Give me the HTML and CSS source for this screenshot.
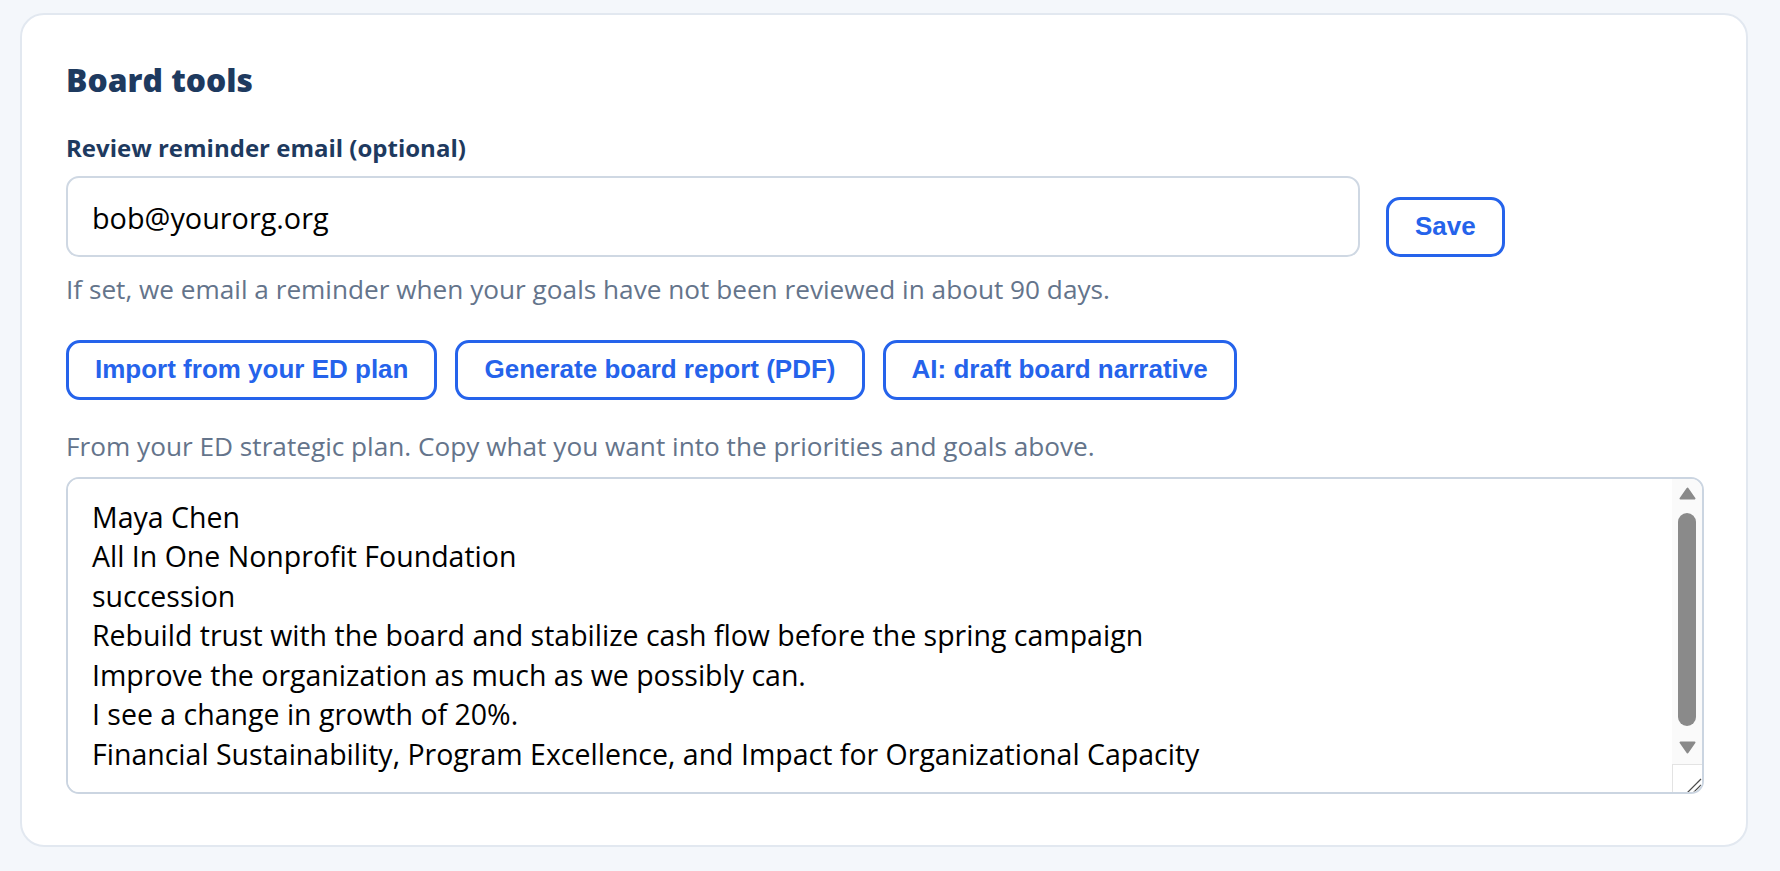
FILE: index.html
```html
<!DOCTYPE html>
<html lang="en">
<head>
    <meta charset="UTF-8">
    <meta name="viewport" content="width=device-width, initial-scale=1.0">
    <title>Board tools</title>
    <link rel="stylesheet" href="styles.css">
</head>
<body>
    <div class="page">
        <section class="card">
            <h2 class="card-title">Board tools</h2>

            <label class="field-label" for="reviewEmail">Review reminder email (optional)</label>
            <div class="email-row">
                <input type="email" id="reviewEmail" name="reviewEmail" value="bob@yourorg.org">
                <button type="button" class="btn">Save</button>
            </div>
            <p class="hint hint-email">If set, we email a reminder when your goals have not been reviewed in about 90 days.</p>

            <div class="actions">
                <button type="button" class="btn">Import from your ED plan</button>
                <button type="button" class="btn">Generate board report (PDF)</button>
                <button type="button" class="btn">AI: draft board narrative</button>
            </div>

            <p class="hint hint-plan">From your ED strategic plan. Copy what you want into the priorities and goals above.</p>
            <div class="plan-box">
                <textarea id="edPlan" readonly>Maya Chen
All In One Nonprofit Foundation
succession
Rebuild trust with the board and stabilize cash flow before the spring campaign
Improve the organization as much as we possibly can.
I see a change in growth of 20%.
Financial Sustainability, Program Excellence, and Impact for Organizational Capacity</textarea>
                <div class="scrollbar">
                    <svg class="arrow arrow-up" width="17" height="13" viewBox="0 0 17 13">
                        <path d="M8.5 1.5 L15.5 11.5 L1.5 11.5 Z" fill="#8a8a8a" stroke="#8a8a8a" stroke-width="2" stroke-linejoin="round"/>
                    </svg>
                    <div class="thumb"></div>
                    <svg class="arrow arrow-down" width="17" height="13" viewBox="0 0 17 13">
                        <path d="M1.5 1.5 L15.5 1.5 L8.5 11.5 Z" fill="#8a8a8a" stroke="#8a8a8a" stroke-width="2" stroke-linejoin="round"/>
                    </svg>
                    <div class="resizer">
                        <svg width="29" height="28" viewBox="0 0 29 28">
                            <line x1="28" y1="14" x2="14" y2="28" stroke="#4a4a4a" stroke-width="1.2"/>
                            <line x1="28" y1="20" x2="20" y2="28" stroke="#4a4a4a" stroke-width="1.2"/>
                        </svg>
                    </div>
                </div>
            </div>
        </section>
    </div>
</body>
</html>
```

FILE: styles.css
```css
body {
    margin: 0;
    background-color: #f4f7fb;
    font-family: "Open Sans", "Noto Sans", sans-serif;
    color: #000;
}

.page {
    padding: 13px 32px 24px 20px;
}

.card {
    background: #fff;
    border: 2px solid #e2e8f0;
    border-radius: 24px;
    padding: 45px 42px 51px 44px;
}

.card-title {
    margin: 0;
    font-size: 31.8px;
    line-height: 40px;
    font-weight: 800;
    color: #1e3a5f;
}

.field-label {
    display: block;
    margin-top: 32.6px;
    font-size: 24px;
    line-height: 30px;
    font-weight: 700;
    color: #1e3a5f;
}

.email-row {
    display: flex;
    align-items: flex-end;
    gap: 26px;
    margin-top: 13.3px;
}

.email-row input {
    flex: 0 0 1294px;
    box-sizing: border-box;
    height: 81px;
    padding: 3px 24px 0;
    border: 2px solid #cfd8e3;
    border-radius: 13px;
    font-family: inherit;
    font-size: 28.8px;
    color: #000;
    background: #fff;
    outline: none;
}

.btn {
    box-sizing: border-box;
    height: 60px;
    padding: 0 26px;
    border: 3px solid #2563eb;
    border-radius: 14px;
    background: #fff;
    color: #2563eb;
    font-family: "Liberation Sans", Arial, sans-serif;
    font-size: 26px;
    font-weight: 700;
    cursor: pointer;
    white-space: nowrap;
}

.btn:hover {
    background: #eff5ff;
}

.hint {
    margin: 0;
    font-size: 26.2px;
    line-height: 34px;
    color: #64748b;
}

.hint-email {
    margin-top: 15px;
}

.actions {
    display: flex;
    gap: 18px;
    margin-top: 33.9px;
}

.hint-plan {
    margin-top: 28.8px;
}

/* textarea plus a drawn scrollbar column */
.plan-box {
    display: flex;
    height: 317px;
    box-sizing: border-box;
    margin-top: 14.5px;
    border: 2px solid #cbd5e1;
    border-radius: 13px;
    overflow: hidden;
}

.plan-box textarea {
    flex: 1;
    margin: 0;
    padding: 19px 24px 0;
    border: none;
    outline: none;
    resize: none;
    overflow: hidden;
    font-family: inherit;
    font-size: 28.5px;
    line-height: 39.4px;
    color: #000;
    background: #fff;
}

.scrollbar {
    width: 30px;
    display: flex;
    flex-direction: column;
    align-items: center;
    background: #fafafa;
}

.arrow {
    display: block;
    flex: none;
}

.arrow-up {
    margin-top: 8px;
}

.thumb {
    width: 18px;
    height: 213px;
    margin-top: 13px;
    border-radius: 9px;
    background: #8a8a8a;
}

.arrow-down {
    margin-top: 15px;
}

.resizer {
    margin-top: auto;
    width: 100%;
    height: 28px;
    box-sizing: border-box;
    border-top: 1px solid #e3e3e3;
    border-left: 1px solid #e3e3e3;
    background: #fff;
}

.resizer svg {
    display: block;
}
```
